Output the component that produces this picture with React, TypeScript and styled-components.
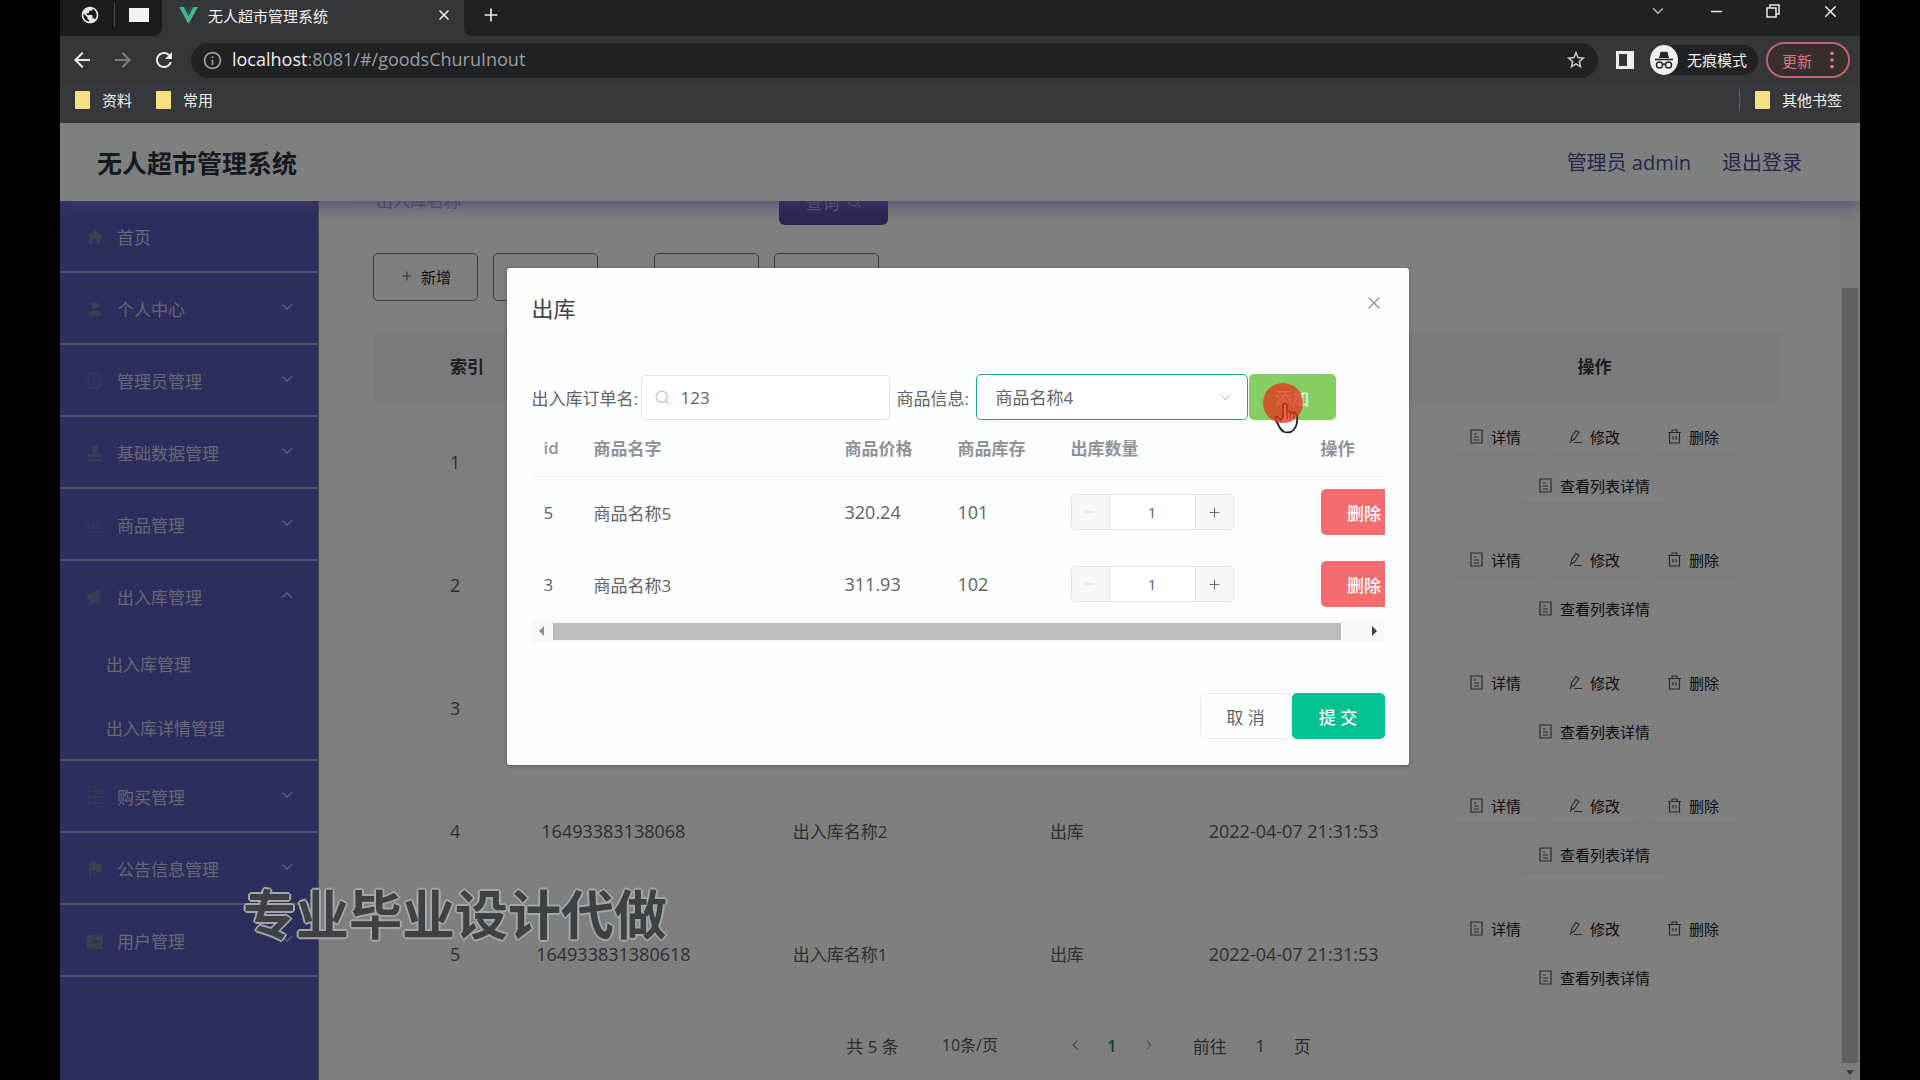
import React from "react";
import styled, { createGlobalStyle } from "styled-components";
import {
  MdArrowBack,
  MdArrowForward,
  MdRefresh,
  MdInfoOutline,
  MdStarBorder,
  MdPublic,
  MdHome,
  MdPerson,
  MdFlag,
} from "react-icons/md";
import { ChevronDown, ChevronUp, ChevronLeft, ChevronRight, X, Plus, Minus, Search } from "lucide-react";

const GlobalStyle = createGlobalStyle`
  * { box-sizing: border-box; }
  body { margin: 0; background: #000; overflow: hidden; }
  body, button, input, select {
    font-family: "Open Sans", "Noto Sans CJK SC", "Noto Sans", sans-serif;
  }
  button, input, select { margin: 0; padding: 0; border: 0; background: none; color: inherit; font-size: inherit; outline: none; }
  a { color: inherit; text-decoration: none; }
  svg { display: block; flex: none; }
`;

const Stage = styled.div`
  position: relative;
  height: 100vh;
  padding: 0 60px;
  background: #000;
`;

const BrowserWindow = styled.div`
  display: flex;
  flex-direction: column;
  height: 100%;
  overflow: hidden;
`;

/* ---------- browser chrome ---------- */

const TabStrip = styled.div`
  display: flex;
  height: 36px;
  background: #202226;
  color: #e8e8ea;
`;

const PinnedTabs = styled.div`
  display: flex;
  align-items: center;
  gap: 14px;
  width: 102px;
  padding: 0 13px 6px 20px;
  background: #1b1b1d;
  border-radius: 0 0 8px 0;
`;

const TabBackdrop = styled.div<{ $grow?: boolean }>`
  display: flex;
  flex: ${(p) => (p.$grow ? "1" : "none")};
  background: #35363a;
`;

const TabDivider = styled.span`
  width: 1px;
  height: 24px;
  background: #4b4c50;
`;

const BlankPage = styled.span`
  width: 20px;
  height: 14px;
  background: #f2f2f2;
`;

const ActiveTab = styled.div`
  display: flex;
  align-items: center;
  width: 302px;
  padding: 0 12px 6px 17px;
  gap: 10px;
  font-size: 15px;
  color: #f1f1f1;
`;

const TabTitle = styled.span`
  flex: 1;
  white-space: nowrap;
`;

const StripRest = styled.div`
  display: flex;
  flex: 1;
  justify-content: space-between;
  padding: 0 20px 6px 17px;
  background: #202226;
  border-radius: 0 0 0 8px;
`;

const IconButton = styled.button<{ $tone?: string }>`
  display: flex;
  align-items: center;
  justify-content: center;
  color: ${(p) => p.$tone ?? "#e8e8ea"};
`;

const WindowControls = styled.div`
  display: flex;
  align-items: center;
  gap: 41px;
  height: 22px;
`;

const Toolbar = styled.div`
  display: flex;
  align-items: center;
  height: 48px;
  padding: 0 10px;
  background: #35363a;
`;

const NavButtons = styled.div`
  display: flex;
  gap: 17px;
  margin-right: 15px;
`;

const AddressBar = styled.div`
  display: flex;
  flex: 1;
  align-items: center;
  height: 35px;
  padding: 0 11px;
  border-radius: 18px;
  background: #202224;
  font-size: 18px;
  color: #9a9da1;
`;

const Address = styled.span`
  flex: 1;
  margin-left: 9px;
  padding-bottom: 2px;
  b { font-weight: 400; color: #f0f0f0; }
`;

const SidePanelIcon = styled.span`
  width: 18px;
  height: 18px;
  margin: 0 16px 0 18px;
  border: 3px solid #eeeeee;
  border-right-width: 7px;
`;

const Incognito = styled.div`
  display: flex;
  align-items: center;
  gap: 9px;
  height: 30px;
  padding-right: 11px;
  border-radius: 15px;
  background: #202224;
  font-size: 15px;
  color: #f1f1f1;
  span { padding-bottom: 2px; }
`;

const UpdateButton = styled.button`
  display: flex;
  align-items: center;
  gap: 18px;
  height: 36px;
  margin-left: 8px;
  padding: 0 14px;
  border: 2px solid #bd6673;
  border-radius: 18px;
  background: #38302f;
  font-size: 15px;
  color: #e5707f;
`;

const BookmarkBar = styled.div`
  display: flex;
  align-items: center;
  height: 39px;
  padding: 0 18px 8px 15px;
  gap: 24px;
  background: #37373c;
  font-size: 15px;
  color: #f1f1f1;
`;

const Bookmark = styled.a`
  display: flex;
  align-items: center;
  gap: 12px;
`;

const Folder = styled.span`
  width: 15px;
  height: 18px;
  background: #f7df84;
  border-radius: 1px;
`;

const OtherBookmarks = styled.div`
  display: flex;
  align-items: center;
  margin-left: auto;
  padding-left: 15px;
  height: 22px;
  border-left: 1px solid #5b5d61;
`;

/* ---------- application page ---------- */

const Page = styled.div`
  position: relative;
  display: flex;
  flex: 1;
  flex-direction: column;
  min-height: 0;
  overflow: hidden;
  background: #fbfffd;
`;

const Header = styled.header`
  position: relative;
  z-index: 1;
  display: flex;
  align-items: center;
  justify-content: space-between;
  height: 78px;
  padding: 2px 58px 0 37px;
  background: #fdffff;
  box-shadow: 0 2px 18px rgba(128, 122, 220, 0.9);
`;

const SystemTitle = styled.h1`
  margin: 0;
  font-size: 25px;
  line-height: 36px;
  font-weight: 700;
  color: #2c3440;
`;

const UserLinks = styled.div`
  display: flex;
  gap: 31px;
  padding-bottom: 3px;
  font-size: 20px;
  color: #514e96;
`;

const Body = styled.div`
  display: flex;
  flex: 1;
  min-height: 0;
`;

const Sidebar = styled.nav`
  width: 259px;
  background: #5a5cbc;
  border-right: 1px solid #9392c8;
  font-size: 17px;
  color: #cfd0e4;
`;

const MenuGroup = styled.div`
  border-bottom: 2px solid #a6a4e0;
`;

const MenuItem = styled.a`
  display: grid;
  grid-template-columns: 20px 1fr 20px;
  align-items: center;
  column-gap: 12px;
  height: 70px;
  padding: 1px 20px 0 25px;
  svg:first-child { color: #74889a; }
  svg:last-child { margin-bottom: 4px; }
`;

const SubItem = styled.a`
  display: flex;
  align-items: center;
  height: 64px;
  padding-left: 46px;
`;

const Main = styled.main`
  flex: 1;
  min-width: 0;
  padding: 0 40px 0 30px;
  overflow: hidden;
`;

const Card = styled.section`
  padding: 0 19px 0 26px;
  min-height: 100%;
  background: #fff;
`;

const SearchRow = styled.div`
  display: flex;
  align-items: flex-end;
  gap: 134px;
  height: 24px;
  overflow: hidden;
`;

const SearchInput = styled.input`
  width: 270px;
  height: 50px;
  padding-left: 1px;
  font-size: 17px;
  &::placeholder { color: #a6a8b8; opacity: 1; }
`;

const QueryButton = styled.button`
  display: flex;
  align-items: center;
  justify-content: center;
  gap: 6px;
  width: 109px;
  height: 48px;
  border-radius: 6px;
  background: #584ba8;
  font-size: 17px;
  color: #b9b4ee;
`;

const ActionBar = styled.div`
  display: flex;
  gap: 15px;
  padding: 28px 0 31px;
  margin-left: -2px;
`;

const OutlineButton = styled.button<{ $apart?: boolean }>`
  display: flex;
  align-items: center;
  justify-content: center;
  gap: 7px;
  width: 105px;
  height: 48px;
  margin-left: ${(p) => (p.$apart ? 41 : 0)}px;
  padding-bottom: 2px;
  border: 1px solid #70787c;
  border-radius: 5px;
  font-size: 15px;
  color: #222;
`;

const DataTable = styled.table`
  width: 100%;
  table-layout: fixed;
  border-collapse: collapse;
  font-size: 17px;
  color: #5c5e62;
  th { height: 69px; padding: 0 0 2px; background: #f6f6f8; color: #3c3e44; }
  td { height: 123px; padding: 0 0 2px; text-align: center; }
`;

const IndexCell = styled.td`
  && { padding-left: 12px; text-align: left; font-size: 18px; }
`;

const IndexHead = styled.th`
  && { padding-left: 12px; text-align: left; }
`;

const NumberCell = styled.td`
  font-size: 18px;
`;

const HeadCheck = styled.input`
  appearance: none;
  display: block;
  width: 16px;
  height: 16px;
  margin-left: 25px;
  border-radius: 2px;
  background: #fbfbfd;
`;

const RowActions = styled.div`
  display: flex;
  flex-wrap: wrap;
  justify-content: center;
  gap: 13px 7px;
`;

const RowAction = styled.button<{ $wide?: boolean }>`
  display: flex;
  align-items: center;
  justify-content: center;
  gap: 8px;
  width: ${(p) => (p.$wide ? 152 : 92)}px;
  height: 36px;
  border-bottom: 1px solid #f4f4f6;
  border-radius: 4px;
  font-size: 15px;
  color: #18181c;
  svg { color: #55555c; }
`;

const Pager = styled.div`
  display: flex;
  align-items: center;
  justify-content: center;
  margin: 12px 0 0;
  height: 34px;
  font-size: 17px;
  color: #55585c;
`;

const PageSize = styled.select`
  appearance: none;
  width: 168px;
  padding-left: 43px;
  font-size: 16px;
`;

const PageNumber = styled.button`
  width: 58px;
  color: #1d8c6c;
  font-weight: 600;
`;

const JumpLabel = styled.label`
  display: flex;
  align-items: center;
  margin-left: 36px;
`;

const JumpInput = styled.input`
  width: 67px;
  text-align: center;
`;

const ScrollTrack = styled.div`
  display: flex;
  flex-direction: column;
  align-items: center;
  width: 19px;
  padding: 87px 2px 4px 0;
  gap: 7px;
  background: #f6fbf8;
`;

const ScrollThumb = styled.div`
  flex: 1;
  width: 16px;
  background: #bcc4c0;
`;

/* ---------- dialog ---------- */

const Overlay = styled.div`
  position: absolute;
  inset: 0;
  z-index: 5;
  display: flex;
  align-items: flex-start;
  justify-content: center;
  padding: 145px 5px 0 0;
  background: rgba(0, 0, 0, 0.5);
`;

const Dialog = styled.div`
  width: 902px;
  padding: 18px 24px 26px 25px;
  border-radius: 3px;
  background: #fdfefe;
  box-shadow: 0 1px 4px rgba(0, 0, 0, 0.3);
  font-size: 17px;
  color: #606266;
`;

const DialogHead = styled.div`
  display: flex;
  align-items: flex-start;
  justify-content: space-between;
  height: 88px;
`;

const DialogTitle = styled.h2`
  margin: 0;
  padding-top: 5px;
  font-size: 22px;
  line-height: 34px;
  font-weight: 400;
  color: #404347;
`;

const CloseButton = styled.button`
  display: flex;
  padding: 7px 1px;
  color: #8d9094;
`;

const FilterRow = styled.div`
  display: flex;
  align-items: center;
`;

const FieldLabel = styled.label<{ $width: number }>`
  width: ${(p) => p.$width}px;
  white-space: nowrap;
`;

const SearchBox = styled.div`
  display: flex;
  align-items: center;
  gap: 10px;
  width: 249px;
  height: 45px;
  margin-right: 7px;
  padding-left: 12px;
  border: 1px solid #e4e5ec;
  border-radius: 4px;
  background: #fff;
  svg { color: #c4c6cc; }
  input { flex: 1; min-width: 0; font-size: 17px; }
`;

const SelectBox = styled.div`
  display: flex;
  align-items: center;
  width: 272px;
  height: 46px;
  padding: 0 13px 0 19px;
  border: 1px solid #22ad84;
  border-radius: 5px;
  background: #fff;
  svg { color: #c4c6cc; }
  select { flex: 1; appearance: none; font-size: 17px; }
`;

const SolidButton = styled.button<{ $color: string; $width: number }>`
  position: relative;
  width: ${(p) => p.$width}px;
  height: 46px;
  border-radius: 5px;
  background: ${(p) => p.$color};
  font-size: 17px;
  font-weight: 500;
  color: #fff;
  white-space: nowrap;
`;

const AddButton = styled(SolidButton)`
  margin-left: 1px;
  font-weight: 400;
`;

const Pointer = styled.svg`
  position: absolute;
  left: 14px;
  top: 9px;
`;

const TableClip = styled.div`
  overflow: hidden;
`;

const GoodsTable = styled.table`
  width: 876px;
  table-layout: fixed;
  border-collapse: collapse;
  th { height: 56px; padding: 0 0 0 12px; text-align: left; color: #909399; font-weight: 600; border-bottom: 1px solid #f0f2f6; }
  td { height: 72px; padding: 0 0 0 12px; }
`;

const Stepper = styled.div`
  display: grid;
  grid-template-columns: 37px 1fr 37px;
  width: 163px;
  height: 36px;
  border: 1px solid #e2e4ea;
  border-radius: 4px;
  overflow: hidden;
  background: #fff;
  input { min-width: 0; text-align: center; font-size: 15px; border: solid #e2e4ea; border-width: 0 1px; }
  button { display: flex; align-items: center; justify-content: center; background: #f5f7fa; }
  button:first-child { color: #d4d6dc; }
`;

const HScroll = styled.div`
  display: flex;
  align-items: center;
  height: 22px;
  padding: 0 7px;
  gap: 8px;
  background: #f7f8fa;
`;

const HThumb = styled.div`
  flex: 1;
  height: 17px;
  margin-right: 23px;
  background: #bbbec0;
`;

const DialogFoot = styled.div`
  display: flex;
  justify-content: flex-end;
  margin-top: 51px;
`;

const CancelButton = styled.button`
  width: 92px;
  height: 46px;
  border: 1px solid #ebecf1;
  border-radius: 5px;
  font-size: 17px;
`;

const Watermark = styled.div`
  position: absolute;
  left: 243px;
  bottom: 125px;
  z-index: 10;
  font-size: 53px;
  line-height: 80px;
  font-weight: 700;
  color: #3c4246;
  text-shadow:
    -1px -1px 0 #a4a7a8, 1px -1px 0 #a4a7a8, -1px 1px 0 #a4a7a8, 1px 1px 0 #a4a7a8,
    -2px 0 0 #a4a7a8, 2px 0 0 #a4a7a8, 0 -2px 0 #a4a7a8, 0 2px 0 #a4a7a8;
  white-space: nowrap;
`;

/* ---------- drawings ---------- */

const VueMark = () => (
  <svg width="19" height="17" viewBox="0 0 19 17">
    <path d="M0 0h5l4.500 9L14 0h5L9.500 17z" fill="#41b883" />
    <path d="M5 0h2.500l2 3.700L11.500 0H14L9.500 9z" fill="#35495e" />
  </svg>
);

const RestoreIcon = () => (
  <svg width="14" height="14" viewBox="0 0 14 14" fill="none" stroke="currentColor" strokeWidth="1.500">
    <path d="M1 4h9v9H1zM4 4V1h9v9h-3" />
  </svg>
);

const SpyIcon = () => (
  <svg width="28" height="30" viewBox="0 0 28 30">
    <ellipse cx="14" cy="15" rx="14" ry="15" fill="#f0f0f4" />
    <path d="M9 13l1.500-6q1-1 3.500 0 2.500-1 3.500 0l1.500 6z" fill="#26272b" />
    <path d="M5 14.500h18" stroke="#26272b" strokeWidth="1.600" />
    <g fill="none" stroke="#26272b" strokeWidth="1.500">
      <circle cx="9.500" cy="20" r="3" />
      <circle cx="18.500" cy="20" r="3" />
      <path d="M12.500 19.500q1.500-1 3 0" />
    </g>
  </svg>
);

const DotsIcon = () => (
  <svg width="4" height="18" viewBox="0 0 4 18" fill="currentColor">
    <circle cx="2" cy="2.500" r="1.800" />
    <circle cx="2" cy="9" r="1.800" />
    <circle cx="2" cy="15.500" r="1.800" />
  </svg>
);

const NoteIcon = () => (
  <svg width="13" height="15" viewBox="0 0 13 15" fill="none" stroke="currentColor" strokeWidth="1.200">
    <path d="M1 1h11v13H1zM4 5h2.500M4 8h5M4 11h5" />
  </svg>
);

const PenIcon = () => (
  <svg width="13" height="15" viewBox="0 0 13 15" fill="none" stroke="currentColor" strokeWidth="1.200">
    <path d="M2 12l.6-4L7 1.500l3 2L5.500 10zM1 14l1-2M5 13.500h8" />
  </svg>
);

const BinIcon = () => (
  <svg width="13" height="15" viewBox="0 0 13 15" fill="none" stroke="currentColor" strokeWidth="1.200">
    <path d="M0 3.500h13M1.500 3.500V14h10V3.500M4 3.500V1h5v2.500M5 7v3.500M8 7v3.500" />
  </svg>
);

const ShieldIcon = () => (
  <svg width="20" height="20" viewBox="0 0 20 20" fill="none" stroke="currentColor" strokeWidth="1.500" opacity="0.45">
    <path d="M3 3h11v14H3zM9 9h7v4q0 4-4 5-3-1-3-5z" />
  </svg>
);

const StampIcon = () => (
  <svg width="20" height="20" viewBox="0 0 20 20" fill="currentColor" opacity="0.8">
    <path d="M7 5a3 3 0 0 1 6 0c0 3-1 4-1 6h5v3H3v-3h5c0-2-1-3-1-6zM3 16h14v2H3z" />
  </svg>
);

const ChartIcon = () => (
  <svg width="20" height="20" viewBox="0 0 20 20" fill="none" stroke="currentColor" strokeWidth="1.500" opacity="0.45">
    <path d="M3 3v14h15M6 13l3-4 3 2 4-6" />
  </svg>
);

const HornIcon = () => (
  <svg width="20" height="20" viewBox="0 0 20 20" fill="currentColor" opacity="0.8">
    <path d="M2 8l12-6v15l-5-2-1 3-3-1 .5-3L2 12zM15 7q3 2.500 0 5z" />
  </svg>
);

const ListIcon = () => (
  <svg width="20" height="20" viewBox="0 0 20 20" fill="none" stroke="currentColor" strokeWidth="2" opacity="0.7">
    <path d="M2 4h3M7 4h11M2 10h3M7 10h11M2 16h3M7 16h11" />
  </svg>
);

const BagIcon = () => (
  <svg width="20" height="20" viewBox="0 0 20 20" fill="currentColor" opacity="0.8">
    <path d="M2 4h16v14H2zM7 9v2q3 3 6 0V9z" fillRule="evenodd" />
  </svg>
);

const Arrow = ({ d, color }: { d: string; color: string }) => (
  <svg width="6" height="10" viewBox="0 0 6 10">
    <path d={d} fill={color} />
  </svg>
);

const ClickPointer = () => (
  <Pointer width="40" height="52" viewBox="0 0 40 52">
    <path
      d="M20 34V23q0-2.500 2-2.500t2 2.500v6q1.500-1.500 3 .5 2-1 3 .8 2.500-.8 3.500 1.200 1 2 .5 8-.5 4-3.500 7.500-3 3.500-9 2-3-1-5-5l-3.500-6.500q-1.500-3 .5-3.500 2-.3 4 3.500z"
      fill="#fff"
      stroke="#1d1d1d"
      strokeWidth="1.800"
      strokeLinejoin="round"
    />
    <path d="M24 29v7M27.500 30v6M30.800 31v5" stroke="#1d1d1d" strokeWidth="1.300" />
    <circle cx="20" cy="20" r="20" fill="#e1371f" opacity="0.78" />
  </Pointer>
);

/* ---------- data ---------- */

type MenuEntry = { label: string; icon: React.ReactNode; leaf?: boolean; children?: string[] };

const menu: MenuEntry[] = [
  { label: "首页", icon: <MdHome size={20} />, leaf: true },
  { label: "个人中心", icon: <MdPerson size={20} /> },
  { label: "管理员管理", icon: <ShieldIcon /> },
  { label: "基础数据管理", icon: <StampIcon /> },
  { label: "商品管理", icon: <ChartIcon /> },
  { label: "出入库管理", icon: <HornIcon />, children: ["出入库管理", "出入库详情管理"] },
  { label: "购买管理", icon: <ListIcon /> },
  { label: "公告信息管理", icon: <MdFlag size={20} /> },
  { label: "用户管理", icon: <BagIcon /> },
];

const orders = [
  { index: 1 },
  { index: 2 },
  { index: 3 },
  { index: 4, no: "16493383138068", name: "出入库名称2", type: "出库", time: "2022-04-07 21:31:53" },
  { index: 5, no: "164933831380618", name: "出入库名称1", type: "出库", time: "2022-04-07 21:31:53" },
];

const goods = [
  { id: 5, name: "商品名称5", price: "320.24", stock: 101 },
  { id: 3, name: "商品名称3", price: "311.93", stock: 102 },
];

/* ---------- sections ---------- */

const BrowserChrome = () => (
  <>
    <TabStrip>
      <TabBackdrop>
        <PinnedTabs>
          <MdPublic size={20} />
          <TabDivider />
          <BlankPage />
        </PinnedTabs>
        <ActiveTab>
          <VueMark />
          <TabTitle>无人超市管理系统</TabTitle>
          <IconButton aria-label="关闭标签页"><X size={16} strokeWidth={2.5} /></IconButton>
        </ActiveTab>
      </TabBackdrop>
      <TabBackdrop $grow>
        <StripRest>
          <IconButton aria-label="新标签页"><Plus size={20} /></IconButton>
          <WindowControls>
            <IconButton aria-label="搜索标签页" $tone="#b5b6b9"><ChevronDown size={18} /></IconButton>
            <IconButton aria-label="最小化"><Minus size={17} /></IconButton>
            <IconButton aria-label="还原"><RestoreIcon /></IconButton>
            <IconButton aria-label="关闭"><X size={19} /></IconButton>
          </WindowControls>
        </StripRest>
      </TabBackdrop>
    </TabStrip>
    <Toolbar>
      <NavButtons>
        <IconButton aria-label="后退"><MdArrowBack size={24} /></IconButton>
        <IconButton aria-label="前进" $tone="#7b7c80"><MdArrowForward size={24} /></IconButton>
        <IconButton aria-label="刷新"><MdRefresh size={24} /></IconButton>
      </NavButtons>
      <AddressBar>
        <MdInfoOutline size={21} />
        <Address><b>localhost</b>:8081/#/goodsChuruInout</Address>
        <IconButton aria-label="收藏" $tone="#d0d1d4"><MdStarBorder size={22} /></IconButton>
      </AddressBar>
      <SidePanelIcon />
      <Incognito><SpyIcon /><span>无痕模式</span></Incognito>
      <UpdateButton>更新<DotsIcon /></UpdateButton>
    </Toolbar>
    <BookmarkBar>
      <Bookmark href="#"><Folder />资料</Bookmark>
      <Bookmark href="#"><Folder />常用</Bookmark>
      <OtherBookmarks><Bookmark href="#"><Folder />其他书签</Bookmark></OtherBookmarks>
    </BookmarkBar>
  </>
);

const SideMenu = () => (
  <Sidebar>
    {menu.map((entry) => (
      <MenuGroup key={entry.label}>
        <MenuItem href="#">
          {entry.icon}
          <span>{entry.label}</span>
          {!entry.leaf && (entry.children ? <ChevronUp size={18} strokeWidth={1.5} /> : <ChevronDown size={18} strokeWidth={1.5} />)}
        </MenuItem>
        {entry.children?.map((child) => <SubItem href="#" key={child}>{child}</SubItem>)}
      </MenuGroup>
    ))}
  </Sidebar>
);

const OrdersPanel = () => (
  <Main>
    <Card>
      <SearchRow>
        <SearchInput placeholder="出入库名称" aria-label="出入库名称" />
        <QueryButton>查询<Search size={16} /></QueryButton>
      </SearchRow>
      <ActionBar>
        <OutlineButton><Plus size={14} strokeWidth={1.2} />新增</OutlineButton>
        <OutlineButton />
        <OutlineButton $apart />
        <OutlineButton />
      </ActionBar>
      <DataTable>
        <colgroup>
          <col style={{ width: 63 }} />
          <col style={{ width: 62 }} />
          <col /><col /><col /><col />
          <col style={{ width: 375 }} />
        </colgroup>
        <thead>
          <tr>
            <th><HeadCheck type="checkbox" aria-label="全选" /></th>
            <IndexHead>索引</IndexHead>
            <th /><th /><th /><th />
            <th>操作</th>
          </tr>
        </thead>
        <tbody>
          {orders.map((o) => (
            <tr key={o.index}>
              <td />
              <IndexCell>{o.index}</IndexCell>
              <NumberCell>{o.no}</NumberCell>
              <td>{o.name}</td>
              <td>{o.type}</td>
              <NumberCell>{o.time}</NumberCell>
              <td>
                <RowActions>
                  <RowAction><NoteIcon />详情</RowAction>
                  <RowAction><PenIcon />修改</RowAction>
                  <RowAction><BinIcon />删除</RowAction>
                  <RowAction $wide><NoteIcon />查看列表详情</RowAction>
                </RowActions>
              </td>
            </tr>
          ))}
        </tbody>
      </DataTable>
      <Pager>
        <span>共 5 条</span>
        <PageSize aria-label="每页条数"><option>10条/页</option></PageSize>
        <IconButton aria-label="上一页" $tone="#8d8f93"><ChevronLeft size={16} /></IconButton>
        <PageNumber>1</PageNumber>
        <IconButton aria-label="下一页" $tone="#b0b2b6"><ChevronRight size={16} /></IconButton>
        <JumpLabel>前往<JumpInput defaultValue="1" />页</JumpLabel>
      </Pager>
    </Card>
  </Main>
);

const OutboundDialog = () => (
  <Overlay>
    <Dialog role="dialog" aria-labelledby="dialog-title">
      <DialogHead>
        <DialogTitle id="dialog-title">出库</DialogTitle>
        <CloseButton aria-label="关闭"><X size={20} strokeWidth={1.5} /></CloseButton>
      </DialogHead>
      <FilterRow>
        <FieldLabel htmlFor="order-name" $width={109}>出入库订单名:</FieldLabel>
        <SearchBox>
          <Search size={17} strokeWidth={1.8} />
          <input id="order-name" defaultValue="123" />
        </SearchBox>
        <FieldLabel htmlFor="goods-select" $width={79}>商品信息:</FieldLabel>
        <SelectBox>
          <select id="goods-select"><option>商品名称4</option></select>
          <ChevronDown size={17} strokeWidth={1.5} />
        </SelectBox>
        <AddButton $color="#85ce61" $width={87}>添加<ClickPointer /></AddButton>
      </FilterRow>
      <TableClip>
        <GoodsTable>
          <colgroup>
            <col style={{ width: 50 }} />
            <col style={{ width: 251 }} />
            <col style={{ width: 113 }} />
            <col style={{ width: 113 }} />
            <col style={{ width: 250 }} />
            <col />
          </colgroup>
          <thead>
            <tr>
              <th>id</th><th>商品名字</th><th>商品价格</th><th>商品库存</th><th>出库数量</th><th>操作</th>
            </tr>
          </thead>
          <tbody>
            {goods.map((g) => (
              <tr key={g.id}>
                <td>{g.id}</td>
                <td>{g.name}</td>
                <NumberCell>{g.price}</NumberCell>
                <NumberCell>{g.stock}</NumberCell>
                <td>
                  <Stepper>
                    <button aria-label="减少"><Minus size={14} /></button>
                    <input defaultValue="1" aria-label="出库数量" />
                    <button aria-label="增加"><Plus size={15} strokeWidth={1.5} /></button>
                  </Stepper>
                </td>
                <td><SolidButton $color="#f56c6f" $width={87}>删除</SolidButton></td>
              </tr>
            ))}
          </tbody>
        </GoodsTable>
      </TableClip>
      <HScroll>
        <Arrow d="M5 0v10L0 5z" color="#8f9194" />
        <HThumb />
        <Arrow d="M0 0v10l5-5z" color="#3c3e42" />
      </HScroll>
      <DialogFoot>
        <CancelButton>取 消</CancelButton>
        <SolidButton $color="#03c191" $width={93}>提 交</SolidButton>
      </DialogFoot>
    </Dialog>
  </Overlay>
);

export default function App() {
  return (
    <Stage>
      <GlobalStyle />
      <BrowserWindow>
        <BrowserChrome />
        <Page>
          <Header>
            <SystemTitle>无人超市管理系统</SystemTitle>
            <UserLinks>
              <span>管理员 admin</span>
              <a href="#">退出登录</a>
            </UserLinks>
          </Header>
          <Body>
            <SideMenu />
            <OrdersPanel />
            <ScrollTrack>
              <ScrollThumb />
              <svg width="8" height="6" viewBox="0 0 8 6"><path d="M0 0h8L4 5z" fill="#6d7470" /></svg>
            </ScrollTrack>
          </Body>
          <OutboundDialog />
        </Page>
      </BrowserWindow>
      <Watermark>专业毕业设计代做</Watermark>
    </Stage>
  );
}
